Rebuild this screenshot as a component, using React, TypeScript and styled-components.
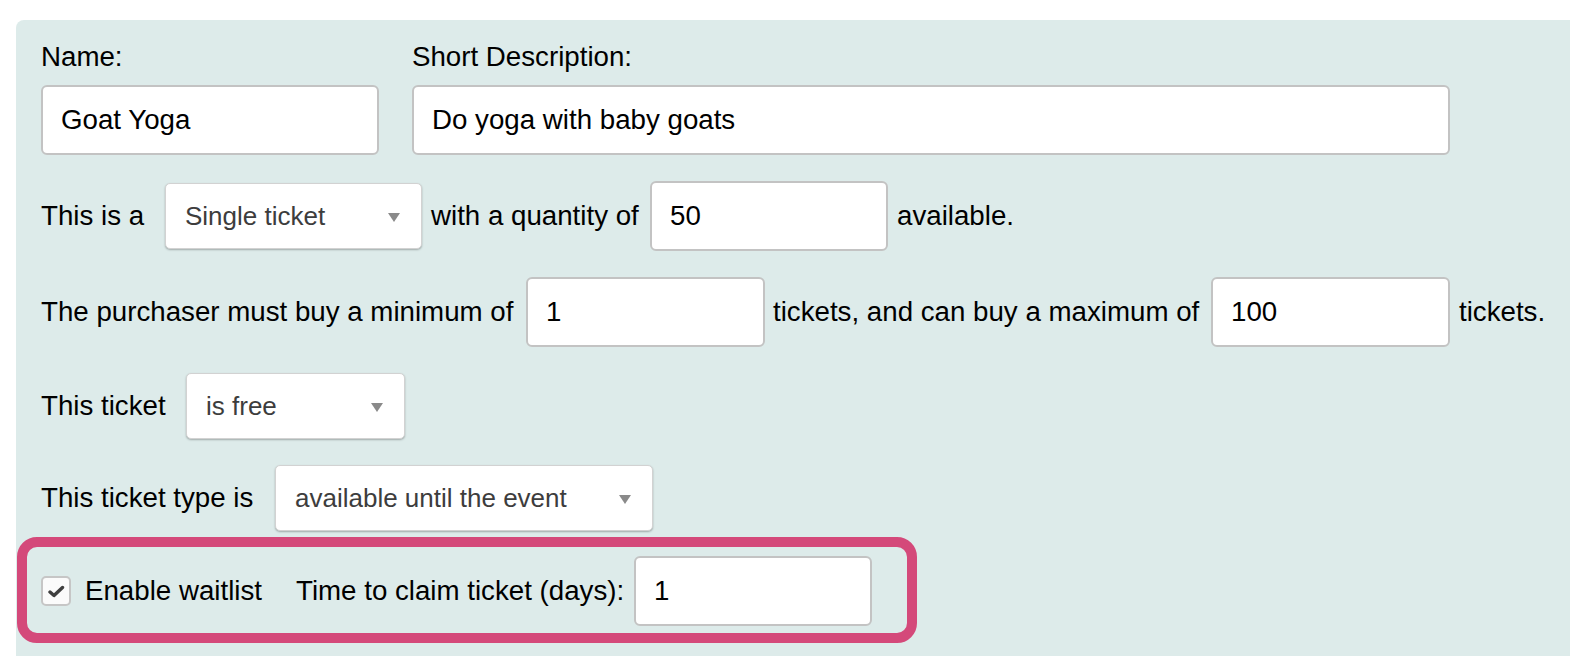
import React from "react";
import styled, { createGlobalStyle } from "styled-components";

const GlobalStyle = createGlobalStyle`
  html, body {
    margin: 0;
    padding: 0;
    background: #ffffff;
  }
  body {
    font-family: "Liberation Sans", Arial, Helvetica, sans-serif;
  }
`;

const Panel = styled.div`
  box-sizing: border-box;
  margin: 20px 0 0 16px;
  padding: 21px 0 0 25px;
  min-height: 636px;
  background: #ddebea;
  border-top-left-radius: 8px;
  font-size: 27.7px;
  line-height: 32px;
  color: #000;
`;

const HeaderGrid = styled.div`
  display: grid;
  grid-template-columns: 338px 1038px;
  column-gap: 33px;
`;

const Field = styled.div`
  display: flex;
  flex-direction: column;
  gap: 12px;
`;

const Label = styled.label`
  display: block;
  white-space: nowrap;
`;

const TextInput = styled.input<{ $w: number; $mr?: number }>`
  box-sizing: border-box;
  flex: none;
  width: ${(p) => p.$w}px;
  height: 70px;
  margin: 0 ${(p) => p.$mr ?? 0}px 0 0;
  padding: 0 18px;
  border: 2px solid #c3c3c3;
  border-radius: 6px;
  background: #fff;
  font-family: inherit;
  font-size: 27.7px;
  color: #000;
  outline: none;
`;

const Row = styled.div<{ $mt?: number }>`
  display: flex;
  align-items: center;
  margin-top: ${(p) => p.$mt ?? 26}px;
  white-space: nowrap;
`;

const Phrase = styled.span<{ $w?: number }>`
  flex: none;
  ${(p) => (p.$w ? `width: ${p.$w}px;` : "")}
`;

const SelectBox = styled.div<{ $w: number; $mr?: number }>`
  box-sizing: border-box;
  flex: none;
  display: flex;
  align-items: center;
  justify-content: space-between;
  width: ${(p) => p.$w}px;
  height: 66px;
  margin-right: ${(p) => p.$mr ?? 0}px;
  padding: 0 21px 0 19px;
  background: #fff;
  border: 1px solid #d2d2d2;
  border-radius: 5px;
  box-shadow: 0 1px 2px rgba(0, 0, 0, 0.28);
  font-size: 26px;
  color: #3d3d3d;
`;

const Arrow = styled.svg`
  flex: none;
  width: 12px;
  height: 9px;
  margin-top: 2px;
`;

const Highlight = styled.div`
  display: inline-flex;
  align-items: center;
  margin: 6px 0 0 -24px;
  padding: 9px 35px 7px 14px;
  border: 10px solid #d4497a;
  border-radius: 20px;
  white-space: nowrap;
`;

const CheckBox = styled.span`
  box-sizing: border-box;
  flex: none;
  display: flex;
  align-items: center;
  justify-content: center;
  width: 30px;
  height: 30px;
  margin-right: 14px;
  border: 2px solid #c6c6c6;
  border-radius: 5px;
  background: #fbfbfb;
`;

const Check = styled.svg`
  width: 18px;
  height: 13px;
  filter: blur(0.3px);
`;

const Select = ({ w, mr, children }: { w: number; mr?: number; children: React.ReactNode }) => (
  <SelectBox $w={w} $mr={mr}>
    <span>{children}</span>
    <Arrow viewBox="0 0 12 9">
      <polygon points="0,0 12,0 6,9" fill="#8a8a8a" />
    </Arrow>
  </SelectBox>
);

export default function App() {
  return (
    <>
      <GlobalStyle />
      <Panel>
        <HeaderGrid>
          <Field>
            <Label>Name:</Label>
            <TextInput $w={338} defaultValue="Goat Yoga" />
          </Field>
          <Field>
            <Label>Short Description:</Label>
            <TextInput $w={1038} defaultValue="Do yoga with baby goats" />
          </Field>
        </HeaderGrid>

        <Row>
          <Phrase $w={124}>This is a</Phrase>
          <Select w={257} mr={9}>Single ticket</Select>
          <Phrase $w={219}>with a quantity of</Phrase>
          <TextInput $w={238} $mr={9} defaultValue="50" />
          <Phrase>available.</Phrase>
        </Row>

        <Row>
          <Phrase $w={485}>The purchaser must buy a minimum of</Phrase>
          <TextInput $w={239} $mr={8} defaultValue="1" />
          <Phrase $w={438}>tickets, and can buy a maximum of</Phrase>
          <TextInput $w={239} $mr={9} defaultValue="100" />
          <Phrase>tickets.</Phrase>
        </Row>

        <Row>
          <Phrase $w={145}>This ticket</Phrase>
          <Select w={219}>is free</Select>
        </Row>

        <Row>
          <Phrase $w={234}>This ticket type is</Phrase>
          <Select w={378}>available until the event</Select>
        </Row>

        <Highlight>
          <CheckBox>
            <Check viewBox="0 0 18 13">
              <path
                d="M3 7 L7 10.5 L15.5 2.5"
                fill="none"
                stroke="#3f3f3f"
                strokeWidth="3.4"
                strokeLinecap="round"
                strokeLinejoin="round"
              />
            </Check>
          </CheckBox>
          <Phrase $w={211}>Enable waitlist</Phrase>
          <Phrase $w={338}>Time to claim ticket (days):</Phrase>
          <TextInput $w={238} defaultValue="1" />
        </Highlight>
      </Panel>
    </>
  );
}
